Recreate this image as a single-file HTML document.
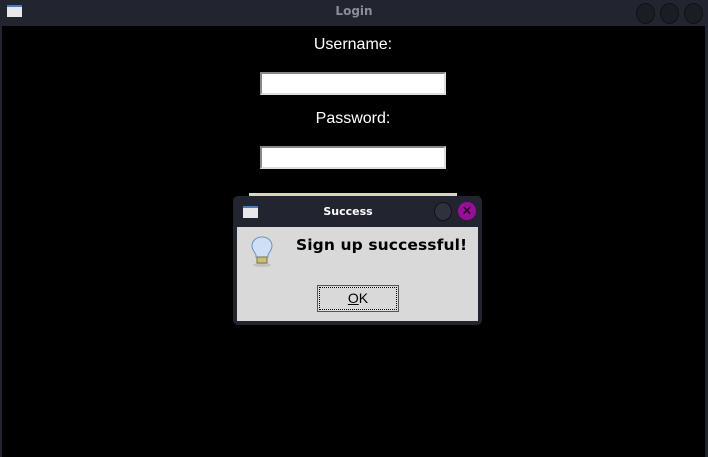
<!DOCTYPE html>
<html><head><style>
body{margin:0;width:708px;height:457px;background:#22252f;position:relative;overflow:hidden;font-family:"Liberation Sans","DejaVu Sans",sans-serif}
.abs{position:absolute}
</style></head><body>
<div class="abs" style="left:0;top:0;width:708px;height:26px;background:#22252f"></div>
<div class="abs" style="left:7px;top:5px;width:15px;height:12px;background:#e8e8e8;border-top:2px solid #4a7ac0;box-sizing:border-box"></div>
<div class="abs" style="left:0;top:4px;width:708px;text-align:center;color:#8a8d96;font-size:12px;font-weight:bold;font-family:'DejaVu Sans',sans-serif">Login</div>
<div class="abs" style="left:636px;top:3px;width:17px;height:19px;border-radius:50%;background:#1b1d24;border:1px solid #111"></div>
<div class="abs" style="left:660px;top:3px;width:17px;height:19px;border-radius:50%;background:#1b1d24;border:1px solid #111"></div>
<div class="abs" style="left:684px;top:3px;width:17px;height:19px;border-radius:50%;background:#1b1d24;border:1px solid #111"></div>
<div class="abs" style="left:2px;top:26px;width:703px;height:431px;background:#000"></div>
<div class="abs" style="left:0;top:36px;width:706px;text-align:center;color:#fff;font-size:16px">Username:</div>
<div class="abs" style="left:260px;top:72px;width:186px;height:23px;background:#fff;border:2px solid;border-color:#888 #ddd #ddd #888;box-sizing:border-box"></div>
<div class="abs" style="left:0;top:110px;width:706px;text-align:center;color:#fff;font-size:16px">Password:</div>
<div class="abs" style="left:260px;top:146px;width:186px;height:23px;background:#fff;border:2px solid;border-color:#888 #ddd #ddd #888;box-sizing:border-box"></div>
<div class="abs" style="left:249px;top:193px;width:208px;height:3px;background:#d9d6b8"></div>
<div class="abs" style="left:233px;top:196px;width:249px;height:129px;background:#22252f;border-radius:5px"></div>
<div class="abs" style="left:243px;top:206px;width:15px;height:12px;background:#e8e8e8;border-top:2px solid #4a7ac0;box-sizing:border-box"></div>
<div class="abs" style="left:233px;top:205px;width:230px;text-align:center;color:#fff;font-size:11px;font-weight:bold;font-family:'DejaVu Sans',sans-serif">Success</div>
<div class="abs" style="left:434px;top:202px;width:16px;height:17px;border-radius:50%;background:#2e323d;border:1px solid #111"></div>
<div class="abs" style="left:458px;top:202px;width:18px;height:18px;border-radius:50%;background:#9b0c9b;color:#000;font-size:13px;font-weight:bold;text-align:center;line-height:18px">✕</div>
<div class="abs" style="left:237px;top:227px;width:241px;height:94px;background:#d9d9d9"></div>
<svg class="abs" style="left:249px;top:236px" width="26" height="32" viewBox="0 0 26 32">
<ellipse cx="13" cy="29" rx="9" ry="2" fill="#aaa" opacity=".5"/>
<path d="M13 1C7 1 3 5 3 10c0 4 3 6 4 9v2h12v-2c1-3 4-5 4-9 0-5-4-9-10-9z" fill="#cfe0f5" stroke="#6f8fbf" stroke-width="1"/>
<rect x="8" y="21" width="10" height="6" fill="#c8c07a" stroke="#7a7440"/>
</svg>
<div class="abs" style="left:296px;top:236px;color:#000;font-size:15.5px;font-weight:bold;font-family:'DejaVu Sans',sans-serif;letter-spacing:0.1px">Sign up successful!</div>
<div class="abs" style="left:317px;top:285px;width:82px;height:27px;border:1px solid #555;box-sizing:border-box;background:#d9d9d9"></div>
<div class="abs" style="left:319px;top:287px;width:78px;height:23px;border:1px dotted #000;box-sizing:border-box;text-align:center;font-size:14px;line-height:21px;color:#000"><u>O</u>K</div>
</body></html>
